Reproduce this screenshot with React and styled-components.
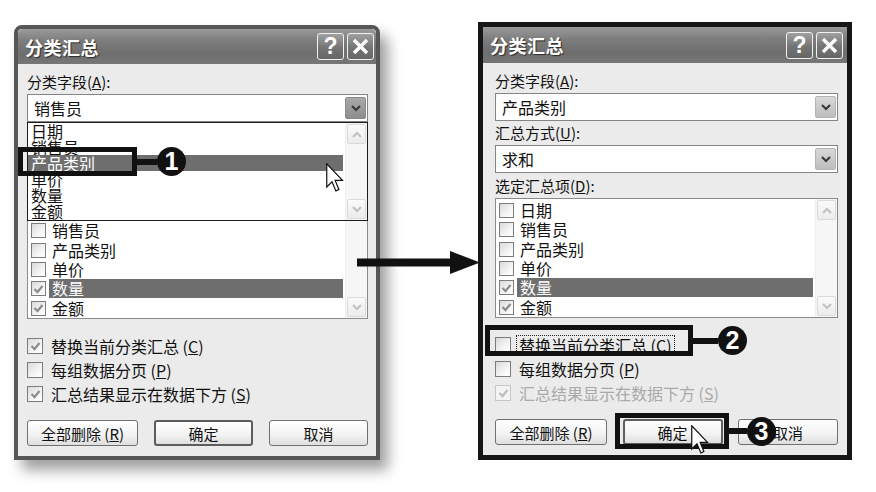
import React from 'react';
import styled, { createGlobalStyle } from 'styled-components';

const GlobalStyle = createGlobalStyle`
  html, body { margin: 0; padding: 0; background: #fff; }
  body { font-family: "Noto Sans CJK SC", "Noto Sans", sans-serif; color: #111; }
`;

const Page = styled.div`
  position: relative;
  width: 876px;
  height: 492px;
  overflow: hidden;
  display: flex;
  align-items: flex-start;
  padding-left: 14px;
  box-sizing: border-box;
  gap: 98px;
  background: #fff;
`;

const Window = styled.div`
  box-sizing: border-box;
  width: ${p => p.$w}px;
  margin-top: ${p => p.$top}px;
  border: ${p => p.$frame}px solid ${p => p.$color};
  border-radius: ${p => p.$radius}px ${p => p.$radius}px 0 0;
  background: #ebebeb;
  box-shadow: ${p => (p.$shadow ? '8px 10px 14px rgba(0,0,0,0.38)' : 'none')};
  display: flex;
  flex-direction: column;
`;

const TitleBar = styled.div`
  height: ${p => p.$h}px;
  display: flex;
  align-items: center;
  padding: 0 ${p => p.$padR}px 0 7px;
  background: linear-gradient(#9a9a9a 0%, #7c7c7c 35%, #6e6e6e 70%, #767676 100%);
  border-radius: ${p => p.$radius}px ${p => p.$radius}px 0 0;
`;

const Title = styled.div`
  font-size: 18px;
  font-weight: 700;
  color: #fff;
  text-shadow: 1px 1px 1px #2a2a2a;
  letter-spacing: 0.5px;
`;

const TitleButtons = styled.div`
  margin-left: auto;
  display: flex;
  gap: 3px;
`;

const CapButton = styled.div`
  box-sizing: border-box;
  width: 27px;
  height: 27px;
  border: 1px solid #f2f2f2;
  border-radius: 3px;
  background: linear-gradient(#a0a0a0, #747474 55%, #666);
  display: flex;
  align-items: center;
  justify-content: center;
  font-family: "Liberation Sans", Arial, sans-serif;
  font-weight: 700;
  font-size: 23px;
  color: #fff;
  line-height: 1;
`;

const Body = styled.div`
  display: flex;
  flex-direction: column;
  padding: 6px ${p => p.$padR}px 10px ${p => p.$padL}px;
`;

const Label = styled.div`
  height: ${p => p.$h || 24}px;
  line-height: ${p => p.$h || 24}px;
  font-size: 15px;
  color: #111;
  white-space: nowrap;
`;

const Key = styled.span`
  text-decoration: underline;
`;

const ComboWrap = styled.div`
  position: relative;
`;

const Combo = styled.div`
  box-sizing: border-box;
  height: 28px;
  border: 1px solid #858585;
  background: #fff;
  display: flex;
  align-items: center;
  padding-left: 6px;
  font-size: 16px;
`;

const DropButton = styled.div`
  box-sizing: border-box;
  margin-left: auto;
  margin-right: 1px;
  width: 21px;
  height: 22px;
  border: 1px solid ${p => (p.$hot ? '#8a8a8a' : '#b4b4b4')};
  border-radius: 2px;
  background: ${p =>
    p.$hot ? 'linear-gradient(#a9a9a9, #8d8d8d)' : 'linear-gradient(#d8d8d8, #bdbdbd)'};
  display: flex;
  align-items: center;
  justify-content: center;
`;

const DropList = styled.div`
  position: absolute;
  top: 28px;
  left: 0;
  right: 0;
  height: 99px;
  box-sizing: border-box;
  border: 1px solid #1c1c1c;
  background: #fff;
  display: flex;
  z-index: 2;
`;

const DropItems = styled.div`
  flex: 1;
  display: flex;
  flex-direction: column;
  padding: 0 2px 0 0;
`;

const DropItem = styled.div`
  height: 16px;
  line-height: 16px;
  font-size: 16px;
  padding-left: 3px;
  background: ${p => (p.$sel ? '#6e6e6e' : 'transparent')};
  color: ${p => (p.$sel ? '#fff' : '#111')};
  white-space: nowrap;
`;

const ListBox = styled.div`
  box-sizing: border-box;
  height: 120px;
  border: 1px solid #8a8a8a;
  background: #fff;
  display: flex;
`;

const Rows = styled.div`
  flex: 1;
  display: flex;
  flex-direction: column;
  padding: 2px 2px 0 3px;
`;

const Row = styled.div`
  height: 19.5px;
  display: flex;
  align-items: center;
  gap: 3px;
`;

const RowText = styled.div`
  flex: 1;
  height: 19px;
  line-height: 19px;
  padding-left: 3px;
  font-size: 16px;
  background: ${p => (p.$sel ? '#6e6e6e' : 'transparent')};
  color: ${p => (p.$sel ? '#fff' : '#111')};
`;

const ScrollBar = styled.div`
  width: 21px;
  display: flex;
  flex-direction: column;
  background: #f6f6f6;
  border-left: 1px solid #efefef;
`;

const ScrollTrack = styled.div`
  flex: 1;
`;

const ScrollButton = styled.div`
  box-sizing: border-box;
  height: 20px;
  margin: 1px;
  border: 1px solid #dadada;
  border-radius: 2px;
  background: linear-gradient(#fafafa, #ececec);
  display: flex;
  align-items: center;
  justify-content: center;
`;

const Box = styled.div`
  box-sizing: border-box;
  flex: none;
  width: ${p => p.$size}px;
  height: ${p => p.$size}px;
  border: 1px solid ${p => (p.$disabled ? '#c6c6c6' : '#7c7c7c')};
  background: ${p =>
    p.$disabled ? '#f3f3f3' : 'linear-gradient(135deg, #d9d9d9 0%, #f4f4f4 60%, #fff 100%)'};
  display: flex;
  align-items: center;
  justify-content: center;
`;

const Options = styled.div`
  margin-top: 15px;
  display: flex;
  flex-direction: column;
`;

const OptionRow = styled.div`
  height: 24px;
  display: flex;
  align-items: center;
  gap: 6px;
`;

const OptionText = styled.div`
  font-size: 16px;
  line-height: 18px;
  padding: 0 2px;
  color: ${p => (p.$disabled ? '#a9a9a9' : '#111')};
  outline: ${p => (p.$focus ? '1px dotted #222' : 'none')};
  white-space: nowrap;
`;

const ButtonRow = styled.div`
  margin-top: 14px;
  display: flex;
  justify-content: space-between;
`;

const PushButton = styled.div`
  box-sizing: border-box;
  width: ${p => p.$w}px;
  height: 26px;
  border: ${p => (p.$default ? '2px solid #5d5d5d' : '1px solid #707070')};
  border-radius: 3px;
  background: linear-gradient(#ffffff, #f2f2f2 60%, #dedede);
  display: flex;
  align-items: center;
  justify-content: center;
  font-size: 15px;
  white-space: nowrap;
`;

const Callout = styled.div`
  position: absolute;
  left: ${p => p.$x}px;
  top: ${p => p.$y}px;
  display: flex;
  align-items: center;
  z-index: 5;
`;

const CalloutBox = styled.div`
  box-sizing: border-box;
  width: ${p => p.$w}px;
  height: ${p => p.$h}px;
  border: 5px solid #111;
`;

const Connector = styled.div`
  width: ${p => p.$len}px;
  height: 6px;
  background: #111;
`;

const Badge = styled.div`
  width: 29px;
  height: 29px;
  border-radius: 50%;
  background: #111;
  color: #fff;
  display: flex;
  align-items: center;
  justify-content: center;
  font-family: "Liberation Sans", Arial, sans-serif;
  font-weight: 700;
  font-size: 25px;
  line-height: 1;
`;

const Overlay = styled.svg`
  position: absolute;
  left: ${p => p.$x}px;
  top: ${p => p.$y}px;
  z-index: 6;
`;

const Chevron = ({ up, color }) => (
  <svg width="10" height="7" viewBox="0 0 10 7">
    <polyline
      points={up ? '1,6 5,2 9,6' : '1,1 5,5 9,1'}
      fill="none"
      stroke={color}
      strokeWidth="2.2"
    />
  </svg>
);

const Tick = ({ color }) => (
  <svg width="11" height="10" viewBox="0 0 11 10">
    <polyline points="1.5,5 4.5,8 9.5,2" fill="none" stroke={color} strokeWidth="2.2" />
  </svg>
);

const Check = ({ checked, size = 15, disabled }) => (
  <Box $size={size} $disabled={disabled}>
    {checked && <Tick color={disabled ? '#bdbdbd' : '#8c8c8c'} />}
  </Box>
);

const Cursor = ({ x, y }) => (
  <Overlay $x={x} $y={y} width="18" height="30" viewBox="0 0 12 20">
    <path
      d="M0.5,0.5 L0.5,16 L4,12.5 L6.6,18.6 L8.6,17.7 L6.1,11.6 L11,11.6 Z"
      fill="#fff"
      stroke="#111"
      strokeWidth="0.8"
    />
  </Overlay>
);

const FIELDS = ['日期', '销售员', '产品类别', '单价', '数量', '金额'];
const CHECKED = { 数量: true, 金额: true };

const SummaryDialog = ({ cfg }) => (
  <Window
    $w={cfg.w}
    $top={cfg.top}
    $frame={cfg.frame}
    $color={cfg.frameColor}
    $radius={cfg.radius}
    $shadow={cfg.shadow}
  >
    <TitleBar $h={cfg.titleH} $padR={cfg.capPad} $radius={cfg.radius ? cfg.radius - 3 : 0}>
      <Title>分类汇总</Title>
      <TitleButtons>
        <CapButton>?</CapButton>
        <CapButton>
          <svg width="17" height="17" viewBox="0 0 17 17">
            <path d="M2,2 L15,15 M15,2 L2,15" stroke="#fff" strokeWidth="3.4" />
          </svg>
        </CapButton>
      </TitleButtons>
    </TitleBar>
    <Body $padL={cfg.padL} $padR={cfg.padR}>
      <Label>分类字段(<Key>A</Key>):</Label>
      <ComboWrap>
        <Combo>
          {cfg.field}
          <DropButton $hot={cfg.open}>
            <Chevron color="#3a3a3a" />
          </DropButton>
        </Combo>
        {cfg.open && (
          <DropList>
            <DropItems>
              {FIELDS.map(f => (
                <DropItem key={f} $sel={f === '产品类别'}>
                  {f}
                </DropItem>
              ))}
            </DropItems>
            <ScrollBar>
              <ScrollButton>
                <Chevron up color="#c2c2c2" />
              </ScrollButton>
              <ScrollTrack />
              <ScrollButton>
                <Chevron color="#c2c2c2" />
              </ScrollButton>
            </ScrollBar>
          </DropList>
        )}
      </ComboWrap>
      <Label>汇总方式(<Key>U</Key>):</Label>
      <Combo>
        求和
        <DropButton>
          <Chevron color="#3a3a3a" />
        </DropButton>
      </Combo>
      <Label $h={25}>选定汇总项(<Key>D</Key>):</Label>
      <ListBox>
        <Rows>
          {FIELDS.map(f => (
            <Row key={f}>
              <Check checked={CHECKED[f]} />
              <RowText $sel={f === '数量'}>{f}</RowText>
            </Row>
          ))}
        </Rows>
        <ScrollBar>
          <ScrollButton>
            <Chevron up color="#c2c2c2" />
          </ScrollButton>
          <ScrollTrack />
          <ScrollButton>
            <Chevron color="#c2c2c2" />
          </ScrollButton>
        </ScrollBar>
      </ListBox>
      <Options>
        {cfg.options.map(o => (
          <OptionRow key={o.key}>
            <Check size={16} checked={o.checked} disabled={o.disabled} />
            <OptionText $focus={o.focus} $disabled={o.disabled}>
              {o.text} (<Key>{o.key}</Key>)
            </OptionText>
          </OptionRow>
        ))}
      </Options>
      <ButtonRow>
        <PushButton $w={cfg.btn[0]}>
          全部删除 (<Key>R</Key>)
        </PushButton>
        <PushButton $w={cfg.btn[1]} $default>
          确定
        </PushButton>
        <PushButton $w={cfg.btn[1]}>取消</PushButton>
      </ButtonRow>
    </Body>
  </Window>
);

const LEFT = {
  w: 366,
  top: 25,
  frame: 4,
  frameColor: '#565656',
  radius: 8,
  shadow: true,
  titleH: 35,
  capPad: 2,
  padL: 9,
  padR: 8,
  field: '销售员',
  open: true,
  btn: [111, 99],
  options: [
    { text: '替换当前分类汇总', key: 'C', checked: true },
    { text: '每组数据分页', key: 'P' },
    { text: '汇总结果显示在数据下方', key: 'S', checked: true },
  ],
};

const RIGHT = {
  w: 374,
  top: 22,
  frame: 5,
  frameColor: '#161616',
  radius: 0,
  shadow: false,
  titleH: 36,
  capPad: 4,
  padL: 12,
  padR: 9,
  field: '产品类别',
  open: false,
  btn: [112, 100],
  options: [
    { text: '替换当前分类汇总', key: 'C', focus: true },
    { text: '每组数据分页', key: 'P' },
    { text: '汇总结果显示在数据下方', key: 'S', checked: true, disabled: true },
  ],
};

export default function App() {
  return (
    <>
      <GlobalStyle />
      <Page>
        <SummaryDialog cfg={LEFT} />
        <SummaryDialog cfg={RIGHT} />

        <Overlay $x={357} $y={251} width="123" height="23" viewBox="0 0 123 23">
          <rect x="0" y="7.5" width="96" height="8" fill="#111" />
          <polygon points="93,0 123,11.5 93,23" fill="#111" />
        </Overlay>

        <Callout $x={18} $y={147}>
          <CalloutBox $w={119} $h={29} />
          <Connector $len={20} />
          <Badge>1</Badge>
        </Callout>
        <Callout $x={485} $y={325}>
          <CalloutBox $w={208} $h={31} />
          <Connector $len={25} />
          <Badge>2</Badge>
        </Callout>
        <Callout $x={615} $y={413}>
          <CalloutBox $w={114} $h={36} />
          <Connector $len={18} />
          <Badge>3</Badge>
        </Callout>

        <Cursor x={326} y={163} />
        <Cursor x={691} y={425} />
      </Page>
    </>
  );
}
